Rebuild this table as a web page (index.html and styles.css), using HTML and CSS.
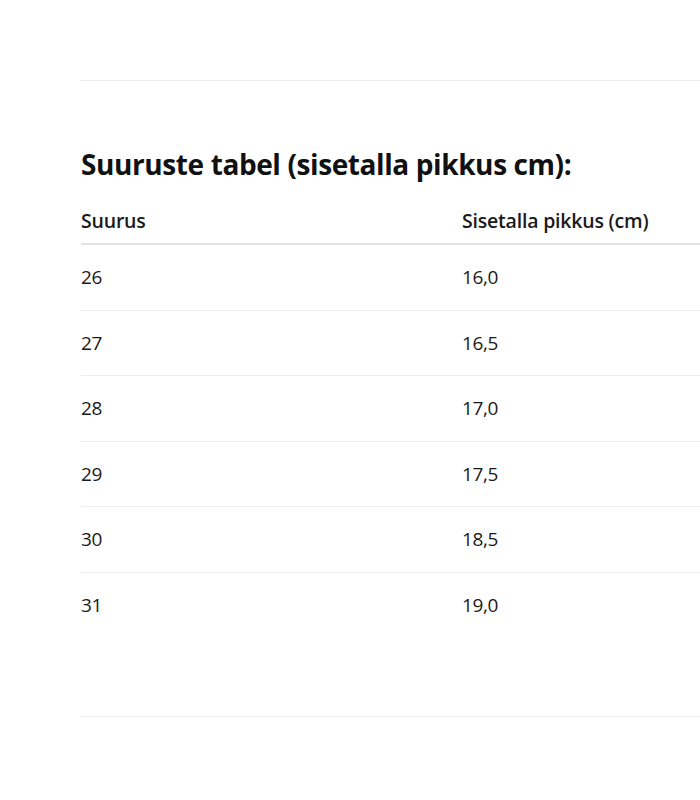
FILE: index.html
```html
<!DOCTYPE html>
<html lang="et">
<head>
<meta charset="utf-8">
<title>Suuruste tabel</title>
<link rel="stylesheet" href="styles.css">
</head>
<body>
<div class="page">
  <div class="rule rule-top"></div>
  <section class="sizes">
    <h2 class="title">Suuruste tabel (sisetalla pikkus cm):</h2>
    <table class="size-table">
      <thead>
        <tr><th>Suurus</th><th>Sisetalla pikkus (cm)</th></tr>
      </thead>
      <tbody>
        <tr><td>26</td><td>16,0</td></tr>
        <tr><td>27</td><td>16,5</td></tr>
        <tr><td>28</td><td>17,0</td></tr>
        <tr><td>29</td><td>17,5</td></tr>
        <tr><td>30</td><td>18,5</td></tr>
        <tr><td>31</td><td>19,0</td></tr>
      </tbody>
    </table>
  </section>
  <div class="rule rule-bottom"></div>
</div>
</body>
</html>
```

FILE: styles.css
```css
html, body {
  margin: 0;
  padding: 0;
  background: #ffffff;
  overflow: hidden;
}
body {
  font-family: "Open Sans", "Noto Sans", sans-serif;
  color: #1a1a1a;
}
.page {
  width: 900px;
  padding-left: 80px;
  padding-top: 80px;
}
.rule {
  height: 1px;
  background: #f0f0f0;
}
.sizes {
  padding-top: 64px;
  padding-left: 1px;
}
.title {
  margin: 0;
  font-size: 28px;
  line-height: 38px;
  font-weight: 700;
  color: #111111;
  letter-spacing: -0.4px;
}
.size-table {
  margin-top: 20px;
  width: 762px;
  border-collapse: collapse;
  table-layout: fixed;
}
.size-table th,
.size-table td {
  text-align: left;
}
.size-table th {
  font-size: 19.5px;
  letter-spacing: -0.2px;
  font-weight: 600;
  line-height: 24px;
  padding: 6px 0 10px 0;
  vertical-align: top;
  border-bottom: 2px solid #e2e2e2;
}
.size-table td {
  font-size: 19px;
  letter-spacing: -0.4px;
  font-weight: 400;
  padding: 0;
  height: 64.5px;
  border-bottom: 1px solid #ededed;
  vertical-align: middle;
}
.size-table tbody tr:last-child td {
  border-bottom: none;
}
.rule-bottom {
  margin-top: 79px;
}
```
